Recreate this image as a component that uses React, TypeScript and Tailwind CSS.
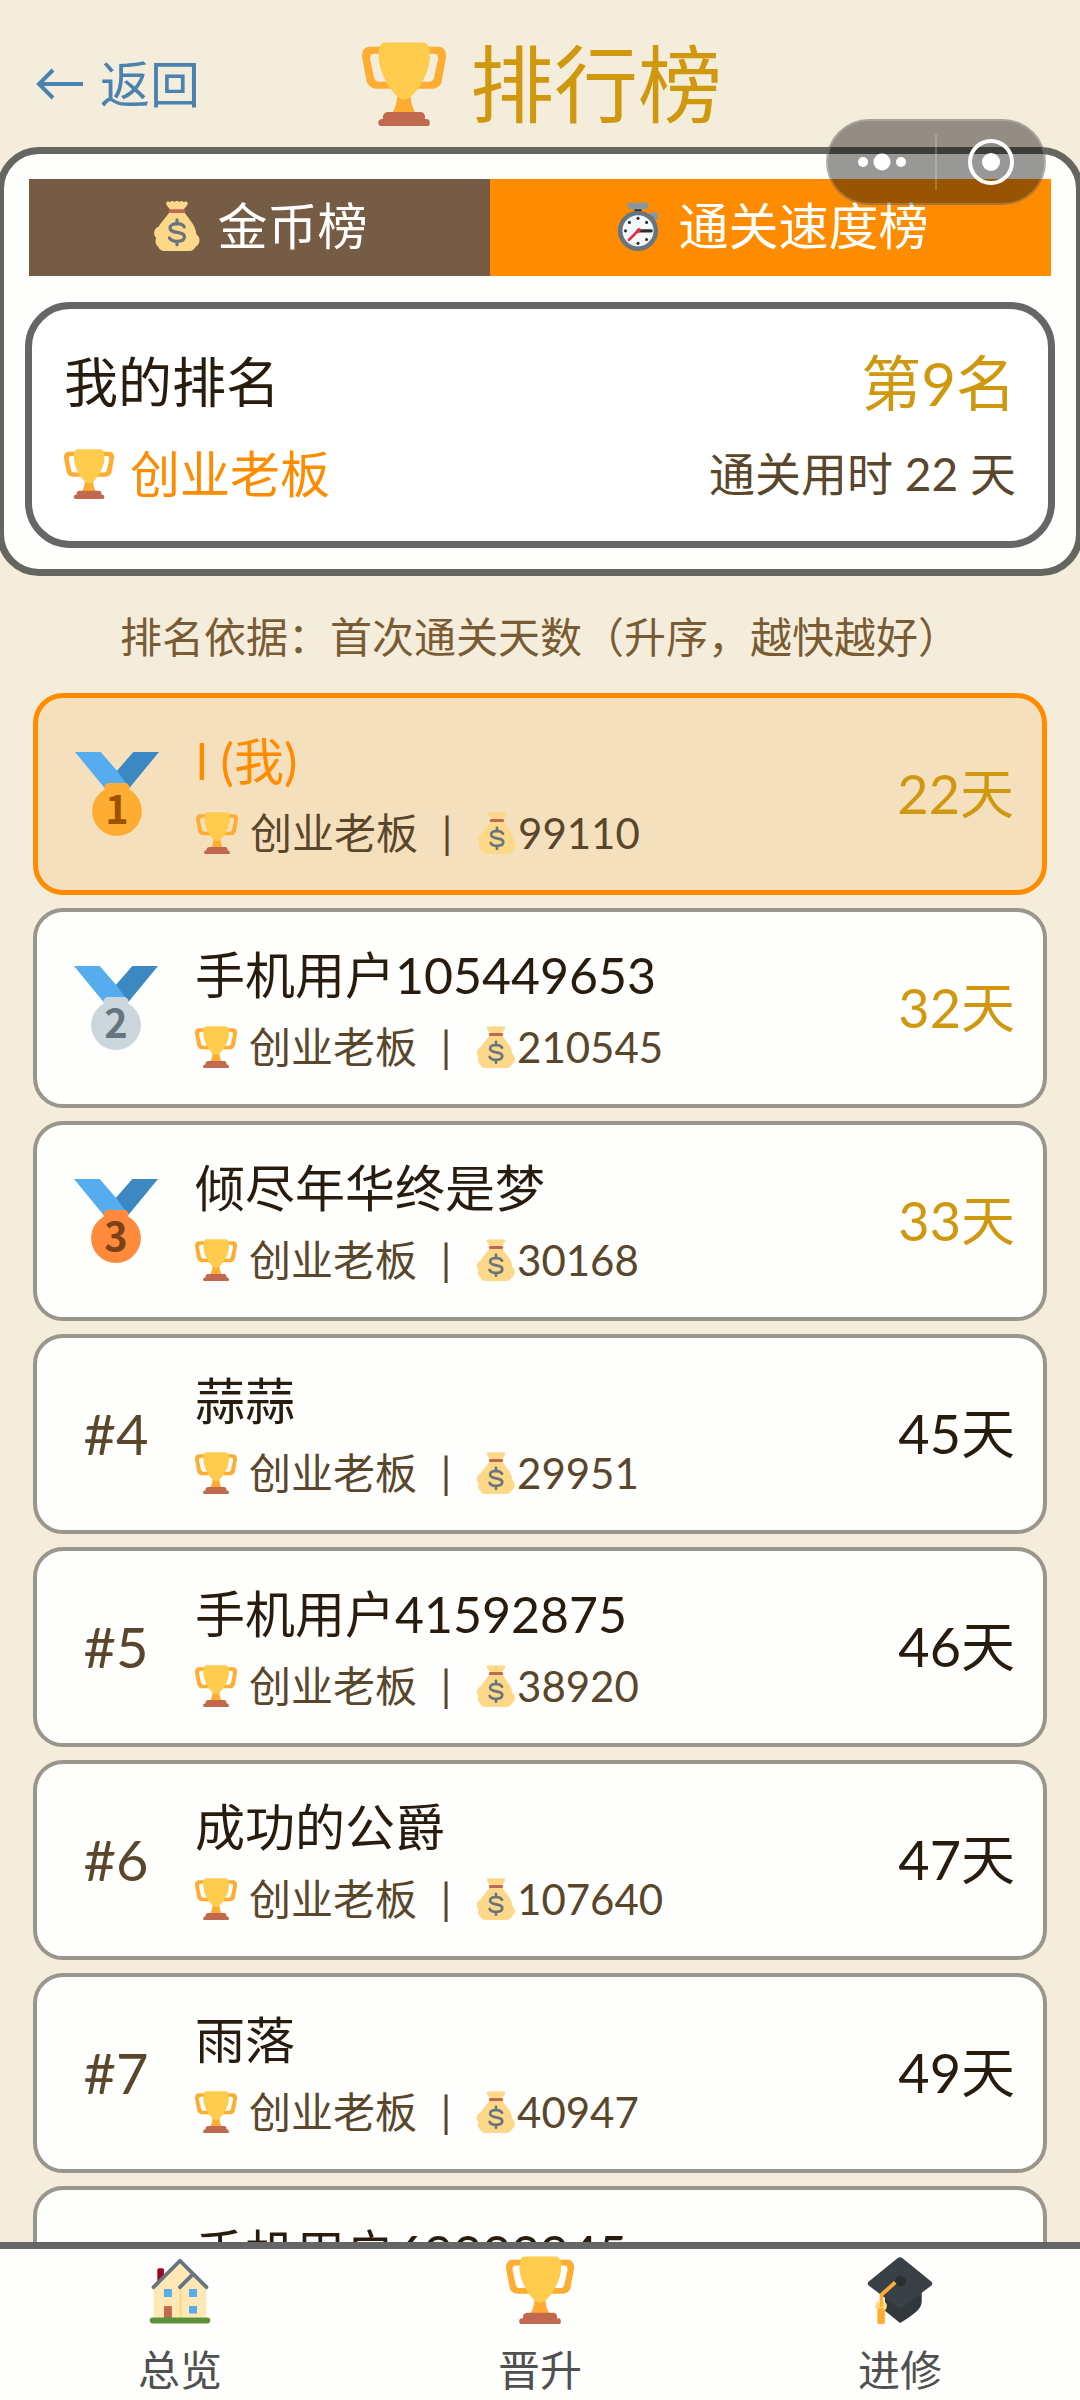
import React from 'react'
import clsx from 'clsx'

type Player = {
  name: string
  coins: number
  days: number
  isMe?: boolean
}

const players: Player[] = [
  { name: 'l (我)', coins: 99110, days: 22, isMe: true },
  { name: '手机用户105449653', coins: 210545, days: 32 },
  { name: '倾尽年华终是梦', coins: 30168, days: 33 },
  { name: '蒜蒜', coins: 29951, days: 45 },
  { name: '手机用户41592875', coins: 38920, days: 46 },
  { name: '成功的公爵', coins: 107640, days: 47 },
  { name: '雨落', coins: 40947, days: 49 },
  { name: '手机用户69333945', coins: 36210, days: 50 },
]

const medals = [
  { disc: '#ffac33', digit: '#9e5200' },
  { disc: '#ccd6dd', digit: '#66757f' },
  { disc: '#ff8a3b', digit: '#7c4119' },
]

type IconProps = { className?: string }

const Trophy: React.FC<IconProps> = ({ className }) => (
  <svg viewBox="0 0 36 36" className={className} aria-hidden="true">
    <path
      fill="#FFAC33"
      d="M5.123 5h6C12.227 5 13 4.896 13 6V4c0-1.104-.773-2-1.877-2h-8c-2 0-3.583 2.125-3 5 0 0 1.791 9.375 1.917 9.958C2.373 18.5 4.164 20 6.081 20h6.958c1.105 0-.039-1.896-.039-3v-2c0 1.104-.773 2-1.877 2h-4c-1.104 0-1.833-1.042-2-2S3.539 7.667 3.539 7.667C3.206 5.75 4.018 5 5.123 5zm25.812 0h-6C23.831 5 22 4.896 22 6V4c0-1.104 1.831-2 2.935-2h8c2 0 3.584 2.125 3 5 0 0-1.633 9.419-1.771 10-.354 1.5-2.042 3-4 3h-7.146C21.914 20 22 18.104 22 17v-2c0 1.104 1.831 2 2.935 2h4c1.104 0 1.834-1.042 2-2s1.584-7.333 1.584-7.333C32.851 5.75 32.04 5 30.935 5zM20.832 22c0-6.958-2.709 0-2.709 0s-3-6.958-3 0-3.291 10-3.291 10h12.292c-.001 0-3.292-3.042-3.292-10z"
    />
    <path
      fill="#FFCC4D"
      d="M29.123 6.577c0 6.775-6.77 18.192-11 18.192-4.231 0-11-11.417-11-18.192 0-5.195 1-6.319 3-6.319 1.374 0 6.025-.027 8-.027l7-.001c2.917-.001 4 .684 4 6.347z"
    />
    <path
      fill="#C1694F"
      d="M27 33c0 1.104.227 2-.877 2h-16C9.018 35 9 34.104 9 33v-1c0-1.104 1.164-2 2.206-2h13.917c1.042 0 1.877.896 1.877 2v1z"
    />
    <path
      fill="#C1694F"
      d="M29 34.625c0 .76.165 1.375-1.252 1.375H8.498C7.206 36 7 35.385 7 34.625v-.25C7 33.615 7.738 33 8.498 33h19.25c.759 0 1.252.615 1.252 1.375v.25z"
    />
  </svg>
)

const MoneyBag: React.FC<IconProps> = ({ className }) => (
  <svg viewBox="0 0 36 36" className={className} aria-hidden="true">
    <path
      fill="#FDD888"
      d="M13.500 7h9l5.500 7.500c2 2.500 3.600 5.500 4 9.500 1.300 1 2.200 2.600 2.200 4.300 0 2-1 3.600-2.600 4.500-.9 2-2.600 3.200-4.600 3.200H9c-2 0-3.800-1.200-4.600-3.100C3.200 32 2.500 30.600 2.500 29c0-.8.200-1.600.6-2.300A5 5 0 0 1 5 18.300C6 16 8 14 8 14z"
    />
    <path
      fill="#FDD888"
      d="M13.600 6.500C12 4.800 10 3 10.200 1.500c.2-1.400 1.800-1.500 2.800-.6.800-1.200 2.400-1.200 3 0 .8-1.200 3-1.200 3.800 0 .7-1.200 2.300-1.200 3 0 1-.9 2.900-.8 3 .6.1 1.500-1.900 3.300-3.400 5z"
    />
    <rect x="11.800" y="6" width="12.400" height="2.600" rx="1.300" fill="#BF6952" />
    <path
      fill="none"
      stroke="#67757F"
      strokeWidth="2.300"
      strokeLinecap="round"
      d="M18 13.500v3M18 29v2.500M23.200 18.600c-1-1.700-2.800-2.300-5.200-2.300-2.800 0-5 1.200-5 3.200 0 4.500 10.400 1.700 10.400 6.300 0 2.200-2.400 3.300-5.400 3.300-2.500 0-4.500-.7-5.500-2.600"
    />
  </svg>
)

const Stopwatch: React.FC<IconProps> = ({ className }) => (
  <svg viewBox="0 0 36 36" className={className} aria-hidden="true">
    <rect x="15.500" y="4" width="5" height="6" fill="#292F33" />
    <rect x="10.500" y="1" width="15" height="5" rx="2" fill="#8A979F" />
    <circle cx="29.500" cy="11" r="3.200" fill="#8A979F" />
    <path d="M26.500 14l2.500-2.500" stroke="#67757F" strokeWidth="2.500" />
    <circle cx="18" cy="21.500" r="14.500" fill="#67757F" />
    <circle cx="18" cy="21.500" r="11.200" fill="#F5F8FA" />
    <g fill="#292F33">
      <circle cx="18" cy="12.500" r="1.100" />
      <circle cx="18" cy="30.500" r="1.100" />
      <circle cx="9" cy="21.500" r="1.100" />
      <circle cx="11.800" cy="15.400" r="1.100" />
      <circle cx="24.200" cy="15.400" r="1.100" />
      <circle cx="24.200" cy="27.700" r="1.100" />
    </g>
    <path d="M18 21.500h9.500" stroke="#292F33" strokeWidth="2.200" strokeLinecap="round" />
    <path d="M19 20.500l-7.500 7.500" stroke="#DD2E44" strokeWidth="2" strokeLinecap="round" />
    <circle cx="18.300" cy="21.300" r="1.500" fill="#DD2E44" />
  </svg>
)

const House: React.FC<IconProps> = ({ className }) => (
  <svg viewBox="0 0 36 36" className={className} aria-hidden="true">
    <rect x="6" y="6.500" width="3.500" height="9" rx=".8" fill="#A0041E" />
    <path fill="#FFE8B6" d="M4 32.500V15.500L18 2.500l7 7.500 7 6v16.500z" />
    <path fill="#FFCC4D" opacity=".7" d="M17.800 17h1v15.500h-1z" />
    <path
      fill="none"
      stroke="#66757F"
      strokeWidth="2"
      strokeLinecap="round"
      strokeLinejoin="round"
      d="M4 16.500L18 2.500l14 14M18 16.500l6.500-6.500"
    />
    <path fill="#55ACEE" d="M9.500 17.500h4.200v4.200H9.500zM22.800 17.500H27v4.200h-4.200zM22.800 26.500H27v4h-4.200z" />
    <path fill="#C1694F" d="M9.500 26.500h4.200v6.500H9.500z" />
    <rect x="2" y="32.500" width="32" height="3.200" rx="1.500" fill="#5C913B" />
  </svg>
)

const GradCap: React.FC<IconProps> = ({ className }) => (
  <svg viewBox="0 0 36 36" className={className} aria-hidden="true">
    <path fill="#31373D" d="M10 19h19.500v5c0 4-4 7-11.500 11.500L10 29z" />
    <path
      fill="#394146"
      d="M16.800 1c.7-.5 1.700-.5 2.400 0l15.300 12.500c.8.700.8 1.500 0 2.200L19.200 27.200c-.7.500-1.700.5-2.400 0L1.500 15.700c-.8-.7-.8-1.500 0-2.200z"
    />
    <circle cx="18.200" cy="13.300" r="2.900" fill="#292F33" />
    <path
      fill="none"
      stroke="#FFAC33"
      strokeWidth="2"
      strokeLinejoin="round"
      d="M15.500 14l-7.300 6.500v5"
    />
    <circle cx="8" cy="26.500" r="3.100" fill="#FFD983" />
    <path stroke="#FFAC33" strokeWidth="4" strokeLinecap="round" d="M8 29.500v5" />
    <path stroke="#FFAC33" strokeWidth="1.500" d="M8.200 23v4" />
  </svg>
)

const Medal: React.FC<IconProps & { place: number }> = ({ place, className }) => {
  const { disc, digit } = medals[place - 1]

  return (
    <svg viewBox="0 0 36 36" className={className} role="img" aria-label={`第${place}名`}>
      <path fill="#55ACEE" d="M18 8l-7-8H0l14 17 11.521-4.750z" />
      <path fill="#3B88C3" d="M25 0l-7 8 5.390 7.312 1.227-1.489L36 0z" />
      <path
        fill={disc}
        d="M23.205 16.026c.08-.217.131-.448.131-.693 0-1.104-.896-2-2-2h-6.667c-1.104 0-2 .896-2 2 0 .245.05.476.131.693-3.258 1.826-5.464 5.307-5.464 9.307C7.335 31.224 12.111 36 18.002 36s10.667-4.776 10.667-10.667c0-4-2.206-7.481-5.464-9.307z"
      />
      <text
        x="18"
        y="31"
        textAnchor="middle"
        fill={digit}
        className="font-['Noto_Sans_CJK_SC',sans-serif] text-[17px] font-bold"
      >
        {place}
      </text>
    </svg>
  )
}

const PlayerRow: React.FC<Player & { place: number }> = ({ place, name, coins, days, isMe }) => {
  return (
    <li
      className={clsx(
        'flex shrink-0 items-center gap-8 rounded-[30px] py-[25px] pr-7 pl-8',
        isMe ? 'border-[5px] border-[#ff8c00] bg-[#f5e0be]' : 'border-4 border-[#99968c] bg-[#fefefc]',
      )}
    >
      <div className="flex w-[94px] shrink-0 justify-center text-[56px] leading-[84px] text-[#5a462a]">
        {place <= 3 ? <Medal place={place} className="size-[84px]" /> : <span>#{place}</span>}
      </div>

      <div className="min-w-0 flex-1">
        <h2
          className={clsx(
            'truncate text-[50px] leading-[76px]',
            isMe ? 'text-[#ff8c00]' : 'text-[#271c0e]',
          )}
        >
          {name}
        </h2>
        <p className="mt-0.5 flex h-16 items-center text-[42px] leading-[64px] text-[#5a462a]">
          <Trophy className="mr-3 size-[42px]" />
          <span>创业老板</span>
          <span className="w-[58px] text-center">|</span>
          <MoneyBag className="size-[42px]" />
          <span>{coins}</span>
        </p>
      </div>

      <span
        className={clsx('text-[54px] leading-[84px]', place <= 3 ? 'text-[#d0980f]' : 'text-[#271c0e]')}
      >
        {days}天
      </span>
    </li>
  )
}

const navItems = [
  { label: '总览', icon: House },
  { label: '晋升', icon: Trophy },
  { label: '进修', icon: GradCap },
]

const App: React.FC = () => {
  return (
    <div className="flex h-screen flex-col overflow-hidden bg-[#f5eddc] font-['Lato','Noto_Sans_CJK_SC',sans-serif]">
      <header className="grid h-[147px] shrink-0 grid-cols-[1fr_auto_1fr] items-center px-9 pt-5">
        <a href="#back" className="flex items-center gap-4 text-[50px] leading-[72px] text-[#4a82b0]">
          <svg viewBox="0 0 48 48" className="size-12" aria-hidden="true">
            <path d="M47 24H3M17 10L3 24l14 14" fill="none" stroke="currentColor" strokeWidth="4" />
          </svg>
          返回
        </a>
        <h1 className="flex items-center gap-6 pl-1 text-[84px] leading-[120px] text-[#d0980f]">
          <Trophy className="size-[84px]" />
          排行榜
        </h1>
      </header>

      {/* mini-program capsule */}
      <div className="absolute top-[119px] right-[34px] z-10 flex h-[86px] w-[220px] items-center rounded-full border-2 border-white/20 bg-black/40">
        <button type="button" aria-label="更多" className="flex flex-1 justify-center">
          <svg viewBox="0 0 48 20" className="h-5 w-12 fill-white">
            <circle cx="5" cy="10" r="5" />
            <circle cx="24" cy="10" r="8.500" />
            <circle cx="43" cy="10" r="5" />
          </svg>
        </button>
        <span className="h-14 w-0.5 bg-white/20" />
        <button type="button" aria-label="关闭" className="flex flex-1 justify-center">
          <svg viewBox="0 0 48 48" className="size-12">
            <circle cx="24" cy="24" r="21" fill="none" stroke="white" strokeWidth="4" />
            <circle cx="24" cy="24" r="9" fill="white" />
          </svg>
        </button>
      </div>

      <section className="-mx-[3px] shrink-0 rounded-[42px] border-[7px] border-[#666660] bg-[#fefefc] px-[21px] pt-[25px] pb-[21px]">
        <div role="tablist" className="mx-1 flex h-[97px] text-[50px] leading-[72px] text-white">
          <button
            type="button"
            role="tab"
            aria-selected="false"
            className="flex flex-auto items-center justify-center gap-4 bg-[#765c44] pb-1"
          >
            <MoneyBag className="size-[50px]" />
            金币榜
          </button>
          <button
            type="button"
            role="tab"
            aria-selected="true"
            className="flex flex-auto items-center justify-center gap-4 bg-[#ff8c00] pb-1"
          >
            <Stopwatch className="size-[50px]" />
            通关速度榜
          </button>
        </div>

        <div className="mt-[26px] rounded-[45px] border-[7px] border-[#666] bg-white p-8">
          <div className="flex items-center justify-between leading-[84px]">
            <span className="text-[54px] text-[#271c0e]">我的排名</span>
            <span className="text-[60px] text-[#d0980f]">第9名</span>
          </div>
          <div className="mt-3.5 flex items-center justify-between leading-[70px]">
            <span className="flex items-center gap-4 text-[50px] text-[#ff8c00]">
              <Trophy className="size-[50px]" />
              创业老板
            </span>
            <span className="text-[46px] text-[#5a462a]">通关用时 22 天</span>
          </div>
        </div>
      </section>

      <p className="mt-[29px] mb-6 shrink-0 text-center text-[42px] leading-[64px] text-[#7a5c34]">
        排名依据：首次通关天数（升序，越快越好）
      </p>

      <ol className="flex min-h-0 flex-1 flex-col gap-[13px] overflow-y-auto px-[33px] [scrollbar-width:none]">
        {players.map((player, index) => (
          <PlayerRow key={player.name} place={index + 1} {...player} />
        ))}
      </ol>

      <nav className="flex shrink-0 border-t-[7px] border-[#666] bg-[#fefefc] pt-[7px]">
        {navItems.map(({ label, icon: Icon }) => (
          <a
            key={label}
            href={`#${label}`}
            className="flex flex-1 flex-col items-center gap-4 text-[42px] leading-[60px] text-[#505050]"
          >
            <Icon className="size-[68px]" />
            {label}
          </a>
        ))}
      </nav>
    </div>
  )
}

export default App
